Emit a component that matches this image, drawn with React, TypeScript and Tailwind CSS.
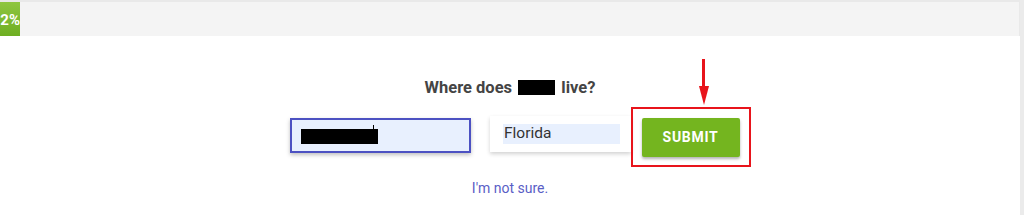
import React from "react";

export default function App() {
  return (
    <div className="flex h-[215px] w-[1024px] overflow-hidden bg-white" style={{ fontFamily: "Roboto, 'Liberation Sans', sans-serif" }}>
      <div className="flex w-[1020px] flex-col">
        <div className="flex h-[36px] border-t-2 border-r border-[#e9e9e9] bg-[#f4f4f4]">
          <div className="flex h-full w-[20px] items-center justify-end bg-gradient-to-b from-[#8fc640] to-[#6eae22]">
            <span className="whitespace-nowrap pt-[3px] text-[15px] font-bold leading-none text-white">2%</span>
          </div>
        </div>
        <div className="flex flex-col items-center pt-[42px]">
          <p className="text-[16.5px] font-bold leading-[20px] text-[#444444]">
            Where does <span className="mx-[2px] inline-block h-[15px] w-[37px] translate-y-[2px] bg-black" /> live?
          </p>
          <div className="mt-[9px] flex w-full justify-center pl-[21px]">
            <div className="relative mt-[11px] h-[35px] w-[181px] border-2 border-[#4c51c2] bg-[#e8f0fe] shadow-[0_2px_4px_rgba(0,0,0,0.25)]">
              <div className="absolute left-[9px] top-[9px] h-[15px] w-[77px] bg-black" />
              <div className="absolute left-[81px] top-[5px] h-[5px] w-px bg-black" />
            </div>
            <div className="ml-[19px] mt-[9px] h-[36px] w-[141px] bg-white pl-[13px] pt-[8px] shadow-[0_2px_4px_rgba(0,0,0,0.18)]">
              <div className="flex h-[20px] w-[117px] items-center bg-[#e8f0fe] pl-px text-[15.5px] leading-none text-[#333333]">
                Florida
              </div>
            </div>
            <div className="relative h-[60px] w-[120px] border-[2.5px] border-[#e8141b] pl-[8.5px] pt-[8.5px]">
              <div className="absolute left-[65.5px] top-[-50px] flex flex-col items-center">
                <div className="h-[27px] w-[3px] bg-[#e8141b]" />
                <div className="h-0 w-0 border-x-[5.5px] border-t-[19px] border-x-transparent border-t-[#e8141b]" />
              </div>
              <button className="flex h-[39px] w-[98px] items-center justify-center rounded-[2px] bg-[#74b51f] text-[14px] font-bold tracking-[0.7px] text-white shadow-[0_2px_3px_rgba(0,0,0,0.3)]">
                SUBMIT
              </button>
            </div>
          </div>
          <a className="mt-[11px] text-[14px] leading-[20px] text-[#5a5ec6]">I'm not sure.</a>
        </div>
      </div>
      <div className="h-full w-[4px] bg-[#ebebeb]" />
    </div>
  );
}
